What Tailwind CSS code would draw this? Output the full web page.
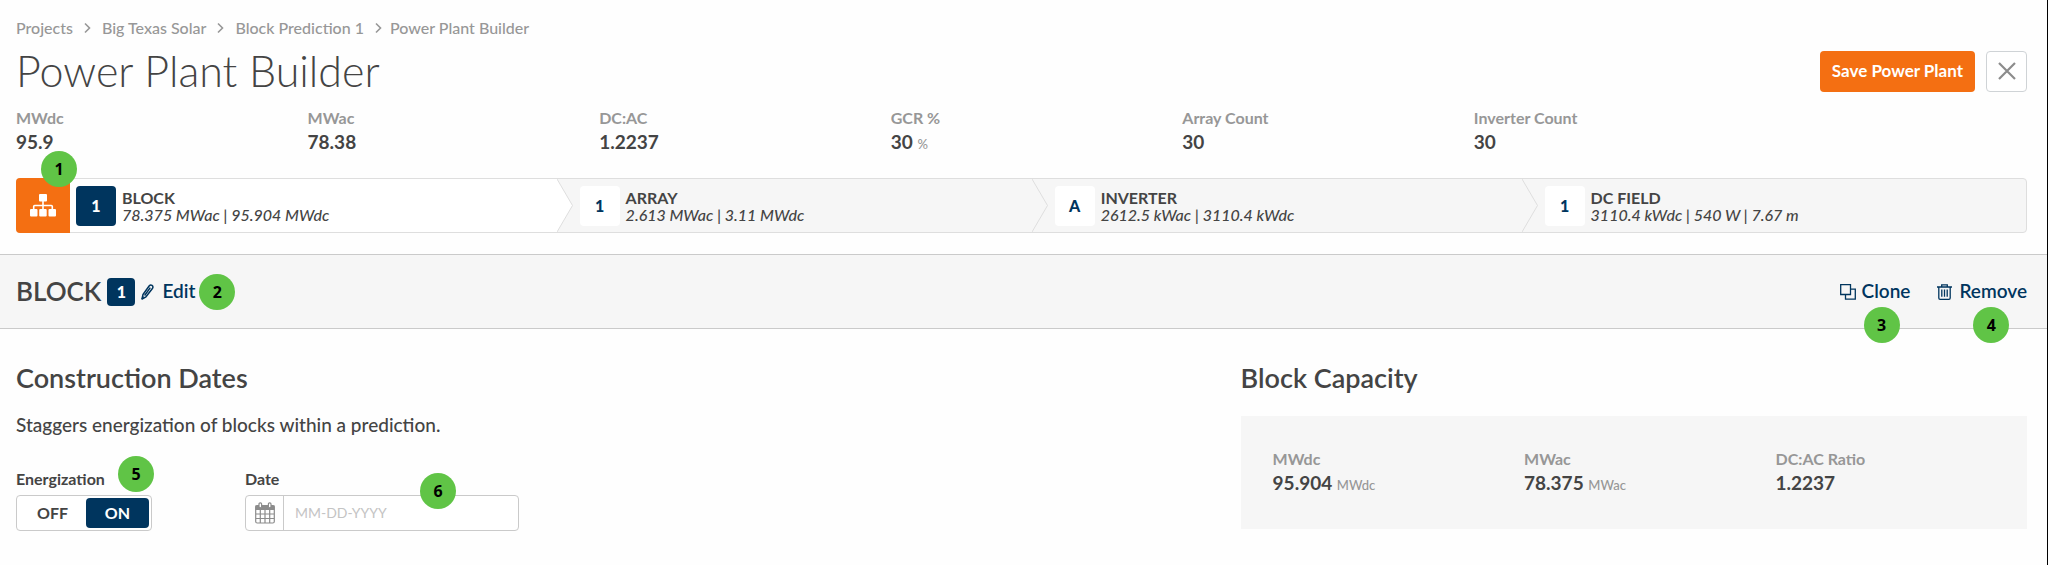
<!DOCTYPE html>
<html lang="en">
<head>
    <meta charset="UTF-8">
    <meta name="viewport" content="width=device-width, initial-scale=1.0">
    <title>Power Plant Builder</title>
    <script src="https://cdn.jsdelivr.net/npm/@tailwindcss/browser@4"></script>
</head>
<body class="min-h-screen bg-[#fefefe] border-r border-black font-['Lato',sans-serif] text-[#444444]">
    <header class="pt-4 pl-4 pr-5">
        <nav aria-label="Breadcrumb" class="flex items-center h-6 gap-[11px] text-base font-medium text-[#979797]">
            <a href="#">Projects</a>
            <svg class="w-[7px] h-3" viewBox="0 0 7 12" fill="none" stroke="currentColor" stroke-width="1.6"><path d="M1 1.5 5.5 6 1 10.5"/></svg>
            <a href="#">Big Texas Solar</a>
            <svg class="w-[7px] h-3" viewBox="0 0 7 12" fill="none" stroke="currentColor" stroke-width="1.6"><path d="M1 1.5 5.5 6 1 10.5"/></svg>
            <a href="#">Block Prediction 1</a>
            <div class="flex items-center gap-2">
                <svg class="w-[7px] h-3" viewBox="0 0 7 12" fill="none" stroke="currentColor" stroke-width="1.6"><path d="M1 1.5 5.5 6 1 10.5"/></svg>
                <span>Power Plant Builder</span>
            </div>
        </nav>

        <div class="flex items-center justify-between mt-[10px]">
            <h1 class="text-[43px] leading-[42px] font-light">Power Plant Builder</h1>
            <div class="flex gap-[11px]">
                <button type="button" class="h-[41px] px-3 rounded bg-[#f46f12] text-[17px] font-bold text-white">Save Power Plant</button>
                <button type="button" aria-label="Close" class="flex items-center justify-center w-[41px] h-[41px] rounded border border-[#cfd3d6] bg-white text-[#8c8c8c]">
                    <svg class="w-5 h-5" viewBox="0 0 20 20" fill="none" stroke="currentColor" stroke-width="2.2"><path d="M2 2 18 18M18 2 2 18"/></svg>
                </button>
            </div>
        </div>

        <!-- Plant totals -->
        <dl class="grid grid-cols-7 -mx-[15px] mt-[14px] leading-6">
            <div class="px-[15px]">
                <dt class="text-base leading-6 font-bold text-[#979797]">MWdc</dt>
                <dd class="text-[19px] leading-6 font-bold">95.9</dd>
            </div>
            <div class="px-[15px]">
                <dt class="text-base leading-6 font-bold text-[#979797]">MWac</dt>
                <dd class="text-[19px] leading-6 font-bold">78.38</dd>
            </div>
            <div class="px-[15px]">
                <dt class="text-base leading-6 font-bold text-[#979797]">DC:AC</dt>
                <dd class="text-[19px] leading-6 font-bold">1.2237</dd>
            </div>
            <div class="px-[15px]">
                <dt class="text-base leading-6 font-bold text-[#979797]">GCR %</dt>
                <dd class="text-[19px] leading-6 font-bold">30 <span class="text-[13px] leading-none font-medium text-[#979797]">%</span></dd>
            </div>
            <div class="px-[15px]">
                <dt class="text-base leading-6 font-bold text-[#979797]">Array Count</dt>
                <dd class="text-[19px] leading-6 font-bold">30</dd>
            </div>
            <div class="px-[15px]">
                <dt class="text-base leading-6 font-bold text-[#979797]">Inverter Count</dt>
                <dd class="text-[19px] leading-6 font-bold">30</dd>
            </div>
        </dl>

        <!-- Plant hierarchy -->
        <nav aria-label="Plant hierarchy" class="relative flex h-[55px] mt-6 rounded border border-[#dedede] bg-[#f6f6f6] text-base leading-[17px]">
            <button type="button" aria-label="Show hierarchy" class="flex items-center justify-center w-[54px] -my-px -ml-px rounded-l bg-[#f46f12] text-white">
                <svg class="w-[26px] h-[23px]" viewBox="0 0 26 23" fill="currentColor">
                    <rect x="9" y="0" width="8" height="7.5" rx="1"/>
                    <rect x="0" y="15" width="7.5" height="7.5" rx="1"/>
                    <rect x="9.2" y="15" width="7.5" height="7.5" rx="1"/>
                    <rect x="18.5" y="15" width="7.5" height="7.5" rx="1"/>
                    <path d="M13 7v9M3.7 16v-3.5q0-1 1-1h16.6q1 0 1 1V16" fill="none" stroke="currentColor" stroke-width="1.6"/>
                </svg>
            </button>
            <a href="#" class="flex flex-auto items-center bg-white pl-[6px]">
                <span class="flex items-center justify-center w-10 h-10 mr-[6px] rounded-sm bg-[#00355e] font-black text-white">1</span>
                <span><span class="block font-bold">BLOCK</span><span class="block italic font-medium">78.375 MWac | 95.904 MWdc</span></span>
            </a>
            <a href="#" class="flex flex-auto items-center">
                <svg class="w-4 h-full mr-[7px]" viewBox="0 0 16 53" preserveAspectRatio="none"><path d="M0 0 15.5 26.5 0 53" fill="#fff" stroke="#dedede"/></svg>
                <span class="flex items-center justify-center w-10 h-10 mr-[6px] rounded-sm bg-white font-black text-[#00355e]">1</span>
                <span><span class="block font-bold">ARRAY</span><span class="block italic font-medium">2.613 MWac | 3.11 MWdc</span></span>
            </a>
            <a href="#" class="flex flex-auto items-center">
                <svg class="w-4 h-full mr-[7px]" viewBox="0 0 16 53" preserveAspectRatio="none"><path d="M0 0 15.5 26.5 0 53" fill="none" stroke="#dedede"/></svg>
                <span class="flex items-center justify-center w-10 h-10 mr-[6px] rounded-sm bg-white font-black text-[#00355e]">A</span>
                <span><span class="block font-bold">INVERTER</span><span class="block italic font-medium">2612.5 kWac | 3110.4 kWdc</span></span>
            </a>
            <a href="#" class="flex flex-auto items-center">
                <svg class="w-4 h-full mr-[7px]" viewBox="0 0 16 53" preserveAspectRatio="none"><path d="M0 0 15.5 26.5 0 53" fill="none" stroke="#dedede"/></svg>
                <span class="flex items-center justify-center w-10 h-10 mr-[6px] rounded-sm bg-white font-black text-[#00355e]">1</span>
                <span><span class="block font-bold">DC FIELD</span><span class="block italic font-medium">3110.4 kWdc | 540 W | 7.67 m</span></span>
            </a>
            <span class="absolute left-6 -top-7 flex items-center justify-center w-9 h-9 rounded-full bg-[#60c446] font-['Noto_Sans',sans-serif] font-bold text-black">1</span>
        </nav>
    </header>

    <!-- Selected component -->
    <section class="flex items-center justify-between h-[75px] mt-[21px] pl-4 pr-5 border-y border-[#cacaca] bg-[#f6f6f6] text-[19px] font-semibold text-[#00355e]">
        <div class="flex items-center">
            <h2 class="text-[26px] font-semibold text-[#444444]">BLOCK</h2>
            <span class="flex items-center justify-center w-7 h-7 ml-[6px] rounded-sm bg-[#00355e] text-base font-black text-white">1</span>
            <button type="button" class="flex items-center gap-2 ml-[6px]">
                <svg class="w-[13px] h-4" viewBox="0 0 13 16" fill="none" stroke="currentColor" stroke-width="1.5" stroke-linejoin="round"><path d="M1 15 2 10.5 8.3 1.8q1.2-1.4 2.7-.4 1.5 1.2.6 2.8L5 12.8Z"/><path d="M9.3 3.6 3.6 11.5M1 15l1.4-2.5"/></svg>
                Edit
            </button>
            <span class="flex items-center justify-center w-9 h-9 ml-1 rounded-full bg-[#60c446] font-['Noto_Sans',sans-serif] text-base font-bold text-black">2</span>
        </div>
        <div class="flex items-center gap-[27px]">
            <button type="button" class="relative flex items-center gap-[6px]">
                <svg class="w-4 h-4" viewBox="0 0 16 16" fill="none" stroke="currentColor" stroke-width="1.3"><path d="M.7.7h9.8v9.8H.7Z"/><path d="M10.5 5.2h4.8v10H5.5v-4.7"/></svg>
                Clone
                <span class="absolute left-6 top-[30px] flex items-center justify-center w-9 h-9 rounded-full bg-[#60c446] font-['Noto_Sans',sans-serif] text-base font-bold text-black">3</span>
            </button>
            <button type="button" class="relative flex items-center gap-[7px]">
                <svg class="w-[15px] h-4" viewBox="0 0 15 16" fill="none" stroke="currentColor" stroke-width="1.3"><path d="M0 3h15M4.7 3V.8h5.6V3M1.8 3v11q0 1.3 1.3 1.3h8.8q1.3 0 1.3-1.3V3M4.8 5.5v7.3M7.5 5.5v7.3M10.2 5.5v7.3"/></svg>
                Remove
                <span class="absolute left-9 top-[30px] flex items-center justify-center w-9 h-9 rounded-full bg-[#60c446] font-['Noto_Sans',sans-serif] text-base font-bold text-black">4</span>
            </button>
        </div>
    </section>

    <main class="pt-[33px] pl-4 pr-5 pb-8">
        <div class="flex -mx-[15px]">
            <section class="w-3/5 px-[15px]">
                <h2 class="text-[27px] leading-8 font-semibold">Construction Dates</h2>
                <p class="mt-[19px] text-[19px] leading-6 font-medium">Staggers energization of blocks within a prediction.</p>
                <form class="flex gap-[93px] mt-8">
                    <div role="group" aria-labelledby="energization-label" class="relative">
                        <div id="energization-label" class="text-base leading-5 font-bold">Energization</div>
                        <div class="flex w-[136px] h-9 mt-[6px] p-[2px] border border-[#cacaca] rounded bg-white text-base font-bold">
                            <label class="flex flex-1 items-center justify-center rounded-sm has-checked:bg-[#00355e] has-checked:text-white">
                                <input type="radio" name="energization" value="off" class="sr-only">OFF
                            </label>
                            <label class="flex w-[63px] items-center justify-center rounded-sm has-checked:bg-[#00355e] has-checked:text-white">
                                <input type="radio" name="energization" value="on" class="sr-only" checked>ON
                            </label>
                        </div>
                        <span class="absolute left-[102px] -top-[13px] flex items-center justify-center w-9 h-9 rounded-full bg-[#60c446] font-['Noto_Sans',sans-serif] text-base font-bold text-black">5</span>
                    </div>
                    <div class="relative">
                        <label for="date" class="block text-base leading-5 font-bold">Date</label>
                        <div class="flex w-[274px] h-9 mt-[6px] border border-[#cacaca] rounded bg-white">
                            <span class="flex shrink-0 items-center justify-center w-[38px] border-r border-[#cacaca] text-[#8c8c8c]">
                                <svg class="w-5 h-[22px]" viewBox="0 0 20 22" fill="none" stroke="currentColor" stroke-width="1.2"><rect x=".7" y="3.5" width="18.6" height="17.5" rx="1.5"/><path d="M1 4h18v3.5H1Z" fill="currentColor"/><path d="M1 12h18M1 16.5h18M5.3 8v13M10 8v13M14.7 8v13"/><rect x="4" y=".8" width="2.6" height="5" rx="1.2" fill="#fff"/><rect x="13.4" y=".8" width="2.6" height="5" rx="1.2" fill="#fff"/></svg>
                            </span>
                            <input type="text" id="date" name="date" placeholder="MM-DD-YYYY" class="w-full px-[11px] text-sm placeholder:text-[#c4c4c4] focus:outline-none">
                        </div>
                        <span class="absolute left-[175px] top-1 flex items-center justify-center w-9 h-9 rounded-full bg-[#60c446] font-['Noto_Sans',sans-serif] text-base font-bold text-black">6</span>
                    </div>
                </form>
            </section>

            <section class="w-2/5 px-[15px]">
                <h2 class="text-[27px] leading-8 font-semibold">Block Capacity</h2>
                <dl class="grid grid-cols-3 mt-[22px] pt-[31px] pb-[34px] pl-8 bg-[#f6f6f6] leading-6">
                    <div>
                        <dt class="text-base leading-6 font-bold text-[#979797]">MWdc</dt>
                        <dd class="text-[19px] leading-6 font-bold">95.904 <span class="text-[13px] leading-none font-medium text-[#979797]">MWdc</span></dd>
                    </div>
                    <div>
                        <dt class="text-base leading-6 font-bold text-[#979797]">MWac</dt>
                        <dd class="text-[19px] leading-6 font-bold">78.375 <span class="text-[13px] leading-none font-medium text-[#979797]">MWac</span></dd>
                    </div>
                    <div>
                        <dt class="text-base leading-6 font-bold text-[#979797]">DC:AC Ratio</dt>
                        <dd class="text-[19px] leading-6 font-bold">1.2237</dd>
                    </div>
                </dl>
            </section>
        </div>
    </main>
</body>
</html>
